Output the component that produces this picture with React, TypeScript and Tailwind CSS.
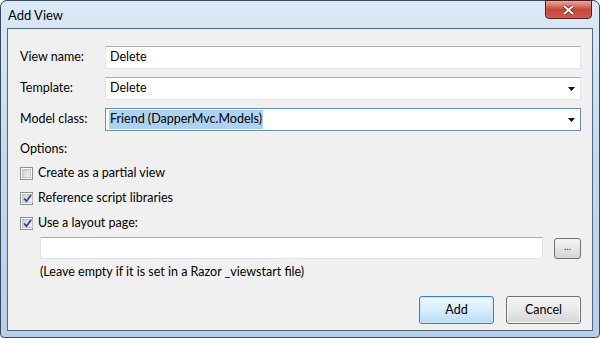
import React from 'react';

const font = { fontFamily: 'Lato, "Noto Sans", sans-serif' };

const Check: React.FC<{ checked?: boolean }> = ({ checked }) => (
  <span className="w-[13px] h-[13px] shrink-0 border border-[#8e8f8f] bg-white p-[1px] flex">
    <span className="flex-1 flex items-center justify-center bg-gradient-to-br from-[#cbcfd5] to-[#f6f6f6] border border-[#c0c4c9]">
      {checked && (
        <svg width="9" height="9" viewBox="0 0 9 9">
          <path d="M1 4.5 L3.5 7.2 L8 1" fill="none" stroke="#2f4290" strokeWidth="1.8" />
        </svg>
      )}
    </span>
  </span>
);

const Arrow = () => (
  <svg width="7" height="4" viewBox="0 0 7 4" className="mr-[5px]">
    <path d="M0 0 H7 L3.5 4 Z" fill="#111" />
  </svg>
);

const Field: React.FC<{ label: string; children: React.ReactNode }> = ({ label, children }) => (
  <div className="flex items-center h-[23px]">
    <span className="w-[85px] shrink-0">{label}</span>
    {children}
  </div>
);

export default function App() {
  return (
    <div className="w-[600px] h-[338px] bg-white">
      <div
        className="w-[600px] h-[338px] rounded-t-[7px] rounded-b-[4px] border border-[#3a4a5c] bg-gradient-to-b from-[#dce9f6] via-[#c3d8ee] to-[#b7cfe9] flex flex-col px-[6px] pb-[6px] text-[12.5px] text-black"
        style={font}
      >
        <div className="h-[27px] shrink-0 flex items-start justify-between">
          <span className="pt-[5px] pl-[1px] text-[13px] text-black">Add View</span>
          <div className="w-[47px] h-[19px] mt-[-1px] mr-[1px] rounded-b-[4px] border border-[#4b1b1b] bg-gradient-to-b from-[#e6a89c] via-[#c8493b] to-[#c9584b] flex items-center justify-center shadow-[inset_0_0_1px_#ffd0c8]">
            <svg width="11" height="10" viewBox="0 0 11 10">
              <path d="M1 1 L10 9 M10 1 L1 9" stroke="#5a2a24" strokeWidth="3.4" />
              <path d="M1 1 L10 9 M10 1 L1 9" stroke="#fff" strokeWidth="2" />
            </svg>
          </div>
        </div>
        <div className="flex-1 border border-[#51667e] bg-[#f0f0f0] flex flex-col pl-[12px] pr-[11px] pt-[17px]">
          <div className="flex flex-col gap-[8px]">
            <Field label="View name:">
              <div className="flex-1 h-[23px] bg-white border border-[#e2e3ea] border-t-[#abadb3] flex items-center px-[4px]">Delete</div>
            </Field>
            <Field label="Template:">
              <div className="flex-1 h-[23px] bg-white border border-[#e2e3ea] border-t-[#abadb3] flex items-center justify-between pl-[4px]">
                <span>Delete</span>
                <Arrow />
              </div>
            </Field>
            <Field label="Model class:">
              <div className="flex-1 h-[23px] bg-white border border-[#6d8fb4] flex items-center justify-between pl-[3px]">
                <span className="bg-[#add2f2] px-[1px]">Friend (DapperMvc.Models)</span>
                <Arrow />
              </div>
            </Field>
          </div>
          <div className="mt-[9px] h-[18px] leading-[18px]">Options:</div>
          <div className="flex flex-col gap-[7px] mt-[6px]">
            <label className="flex items-center gap-[5px] h-[18px]"><Check />Create as a partial view</label>
            <label className="flex items-center gap-[5px] h-[18px]"><Check checked />Reference script libraries</label>
            <label className="flex items-center gap-[5px] h-[18px]"><Check checked />Use a layout page:</label>
          </div>
          <div className="flex items-center mt-[5px] pl-[20px]">
            <div className="flex-1 h-[22px] bg-white border border-[#e2e3ea] border-t-[#abadb3]" />
            <button className="ml-[11px] w-[27px] h-[21px] rounded-[3px] border border-[#707070] bg-gradient-to-b from-[#f4f4f4] via-[#e6e6e6] to-[#d4d4d4] text-[10px] leading-[10px] pb-[4px] text-[#333]">...</button>
          </div>
          <div className="pl-[20px] mt-[4px] h-[18px] leading-[18px]">(Leave empty if it is set in a Razor _viewstart file)</div>
          <div className="flex-1" />
          <div className="flex justify-end gap-[12px] pb-[6px]">
            <button className="w-[75px] h-[28px] rounded-[3px] border border-[#3c7fb1] bg-gradient-to-b from-[#eef7fd] via-[#d7eefb] to-[#b6dcf5] shadow-[inset_0_0_0_1px_#cde9fb]">Add</button>
            <button className="w-[75px] h-[28px] rounded-[3px] border border-[#707070] bg-gradient-to-b from-[#f4f4f4] via-[#e8e8e8] to-[#d6d6d6] shadow-[inset_0_0_0_1px_#fbfbfb]">Cancel</button>
          </div>
        </div>
      </div>
    </div>
  );
}
